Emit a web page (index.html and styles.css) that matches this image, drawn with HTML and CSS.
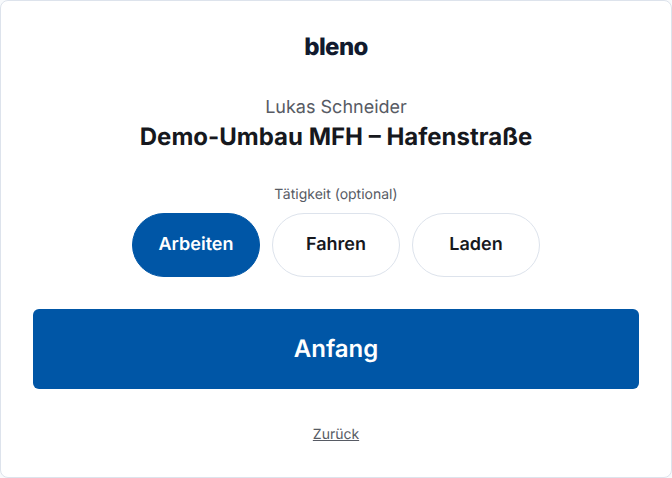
FILE: index.html
```html
<!DOCTYPE html>
<html lang="de">
<head>
<meta charset="utf-8">
<title>bleno</title>
<link rel="stylesheet" href="styles.css">
</head>
<body>
<main class="card">
  <div class="logo">bleno</div>
  <div class="worker">Lukas Schneider</div>
  <h1 class="project">Demo-Umbau MFH – Hafenstraße</h1>
  <div class="label">Tätigkeit (optional)</div>
  <div class="pills">
    <button class="pill active">Arbeiten</button>
    <button class="pill">Fahren</button>
    <button class="pill">Laden</button>
  </div>
  <button class="start">Anfang</button>
  <a class="back" href="#">Zurück</a>
</main>
</body>
</html>
```
FILE: styles.css
```css
* { box-sizing: border-box; }
html, body { margin: 0; height: 100%; }
body {
  background: #f8fafc;
  font-family: Inter, "Liberation Sans", sans-serif;
  color: #16181d;
  text-rendering: geometricPrecision;
}
.card {
  height: 478px;
  background: #fff;
  border: 1px solid #dde3ec;
  border-radius: 8px;
  padding: 32px 32px 0;
  display: flex;
  flex-direction: column;
  align-items: center;
}
.logo {
  font-size: 24px;
  line-height: 28px;
  font-weight: 800;
  letter-spacing: -0.6px;
  color: #111a2e;
}
.worker {
  margin-top: 35px;
  font-size: 18px;
  line-height: 24px;
  color: #575b64;
}
.project {
  margin: 1px 0 0;
  font-size: 24px;
  line-height: 32px;
  font-weight: 700;
}
.label {
  margin-top: 32px;
  font-size: 14px;
  line-height: 20px;
  color: #575b64;
}
.pills {
  margin-top: 8px;
  display: flex;
  gap: 12px;
}
.pill {
  width: 128px;
  height: 64px;
  padding: 0 0 2px;
  border: 1px solid #dde3ec;
  border-radius: 32px;
  background: #fff;
  color: #16181d;
  font: 600 18px Inter, sans-serif;
  text-rendering: geometricPrecision;
}
.pill.active {
  background: #0056a6;
  border-color: #0056a6;
  color: #fff;
}
.start {
  margin-top: 32px;
  width: 100%;
  height: 80px;
  padding: 0 0 2px;
  border: 0;
  border-radius: 6px;
  background: #0056a6;
  color: #fff;
  font: 600 24px Inter, sans-serif;
  text-rendering: geometricPrecision;
}
.back {
  margin-top: 36px;
  font-size: 14px;
  line-height: 20px;
  color: #575b64;
  text-decoration: underline;
}
```
